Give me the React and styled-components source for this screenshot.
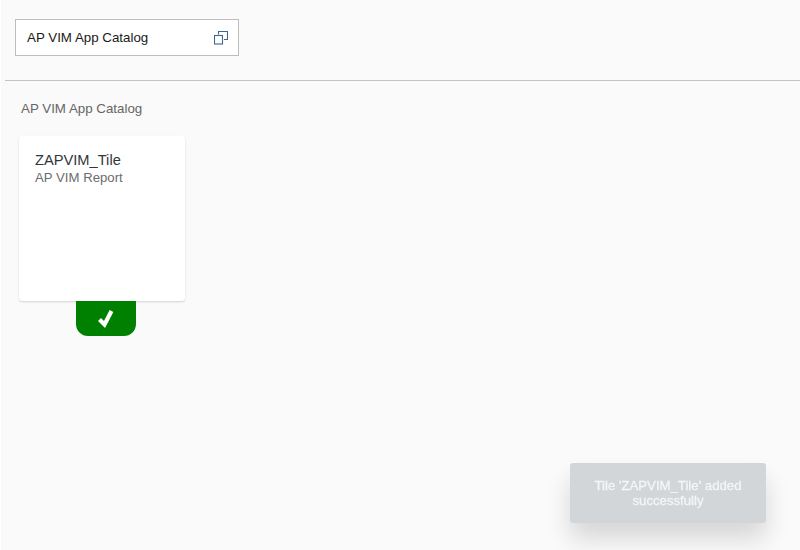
import React from 'react';
import styled, { createGlobalStyle } from 'styled-components';

const GlobalStyle = createGlobalStyle`
  html, body {
    margin: 0;
    height: 100%;
    background: #ffffff;
    font-family: Arial, "Liberation Sans", sans-serif;
  }
`;

const Page = styled.div`
  box-sizing: border-box;
  width: 800px;
  height: 550px;
  margin-left: 1px;
  padding-top: 1px;
  background: #fafafa;
  overflow: hidden;
`;

const Header = styled.div`
  box-sizing: border-box;
  height: 80px;
  margin-left: 4px;
  padding: 18px 0 0 10px;
  border-bottom: 1px solid #c4c4c4;
`;

const TitleBox = styled.div`
  box-sizing: border-box;
  display: flex;
  align-items: center;
  justify-content: space-between;
  width: 224px;
  height: 37px;
  padding: 0 10px 0 11px;
  background: #ffffff;
  border: 1px solid #bdbdbd;
  color: #1a1a1a;
  font-size: 13.33px;
`;

const Content = styled.div`
  padding: 20px 0 0 18px;
`;

const Heading = styled.div`
  margin-left: 2px;
  color: #666666;
  font-size: 13.33px;
  line-height: 16px;
`;

const TileWrap = styled.div`
  width: 166px;
  margin-top: 19px;
`;

const Tile = styled.div`
  box-sizing: border-box;
  height: 165px;
  padding: 15px 16px;
  background: #ffffff;
  border-radius: 3px;
  box-shadow: 0 1px 2px rgba(0, 0, 0, 0.16);
`;

const TileTitle = styled.div`
  color: #32363a;
  font-size: 14.67px;
  line-height: 18px;
`;

const TileSub = styled.div`
  color: #6a6d70;
  font-size: 13.2px;
  line-height: 17px;
`;

const AddedTab = styled.div`
  display: flex;
  align-items: center;
  justify-content: center;
  width: 60px;
  height: 35px;
  margin-left: 57px;
  background: #008000;
  border-radius: 0 0 12px 12px;
`;

const Toast = styled.div`
  position: fixed;
  left: 570px;
  top: 463px;
  box-sizing: border-box;
  display: flex;
  align-items: center;
  justify-content: center;
  width: 196px;
  height: 60px;
  padding: 0 16px;
  background: #d3d6d8;
  border-radius: 3px;
  box-shadow: 0 16px 24px rgba(0, 0, 0, 0.14);
  color: #f4f5f5;
  font-size: 13.2px;
  line-height: 15px;
  text-align: center;
  -webkit-text-stroke: 0.3px #f4f5f5;
`;

const CopyIcon = () => (
  <svg width="14" height="14" viewBox="0 0 14 14" fill="none" stroke="#3f6591" strokeWidth="1.1">
    <rect x="0.5" y="4.5" width="8" height="8.5" />
    <path d="M4.5 3.5V0.5H13.5V8.5H10" />
  </svg>
);

const CheckIcon = () => (
  <svg width="16" height="18" viewBox="0 0 16 18" fill="none" stroke="#ffffff" strokeWidth="4.2">
    <path d="M1.5 9.5L6.5 14.5L13.5 1" />
  </svg>
);

export default function App() {
  return (
    <>
      <GlobalStyle />
      <Page>
        <Header>
          <TitleBox>
            AP VIM App Catalog
            <CopyIcon />
          </TitleBox>
        </Header>
        <Content>
          <Heading>AP VIM App Catalog</Heading>
          <TileWrap>
            <Tile>
              <TileTitle>ZAPVIM_Tile</TileTitle>
              <TileSub>AP VIM Report</TileSub>
            </Tile>
            <AddedTab>
              <CheckIcon />
            </AddedTab>
          </TileWrap>
        </Content>
        <Toast>Tile 'ZAPVIM_Tile' added successfully</Toast>
      </Page>
    </>
  );
}
